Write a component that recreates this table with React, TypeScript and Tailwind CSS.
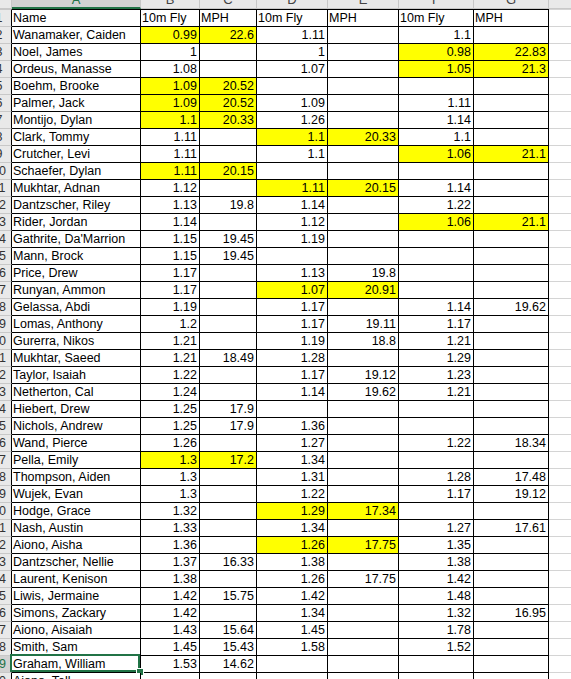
import React from "react";

// column widths include the right border line
const colW = ["w-[129px]", "w-[59px]", "w-[57px]", "w-[71px]", "w-[71px]", "w-[75px]", "w-[75px]"];
const letters = ["A", "B", "C", "D", "E", "F", "G"];

const head = ["Name", "10m Fly", "MPH", "10m Fly", "MPH", "10m Fly", "MPH"];

// "*" marks a yellow cell
const rows: string[][] = [
  ["Wanamaker, Caiden", "0.99*", "22.6*", "1.11", "", "1.1", ""],
  ["Noel, James", "1", "", "1", "", "0.98*", "22.83*"],
  ["Ordeus, Manasse", "1.08", "", "1.07", "", "1.05*", "21.3*"],
  ["Boehm, Brooke", "1.09*", "20.52*", "", "", "", ""],
  ["Palmer, Jack", "1.09*", "20.52*", "1.09", "", "1.11", ""],
  ["Montijo, Dylan", "1.1*", "20.33*", "1.26", "", "1.14", ""],
  ["Clark, Tommy", "1.11", "", "1.1*", "20.33*", "1.1", ""],
  ["Crutcher, Levi", "1.11", "", "1.1", "", "1.06*", "21.1*"],
  ["Schaefer, Dylan", "1.11*", "20.15*", "", "", "", ""],
  ["Mukhtar, Adnan", "1.12", "", "1.11*", "20.15*", "1.14", ""],
  ["Dantzscher, Riley", "1.13", "19.8", "1.14", "", "1.22", ""],
  ["Rider, Jordan", "1.14", "", "1.12", "", "1.06*", "21.1*"],
  ["Gathrite, Da'Marrion", "1.15", "19.45", "1.19", "", "", ""],
  ["Mann, Brock", "1.15", "19.45", "", "", "", ""],
  ["Price, Drew", "1.17", "", "1.13", "19.8", "", ""],
  ["Runyan, Ammon", "1.17", "", "1.07*", "20.91*", "", ""],
  ["Gelassa, Abdi", "1.19", "", "1.17", "", "1.14", "19.62"],
  ["Lomas, Anthony", "1.2", "", "1.17", "19.11", "1.17", ""],
  ["Gurerra, Nikos", "1.21", "", "1.19", "18.8", "1.21", ""],
  ["Mukhtar, Saeed", "1.21", "18.49", "1.28", "", "1.29", ""],
  ["Taylor, Isaiah", "1.22", "", "1.17", "19.12", "1.23", ""],
  ["Netherton, Cal", "1.24", "", "1.14", "19.62", "1.21", ""],
  ["Hiebert, Drew", "1.25", "17.9", "", "", "", ""],
  ["Nichols, Andrew", "1.25", "17.9", "1.36", "", "", ""],
  ["Wand, Pierce", "1.26", "", "1.27", "", "1.22", "18.34"],
  ["Pella, Emily", "1.3*", "17.2*", "1.34", "", "", ""],
  ["Thompson, Aiden", "1.3", "", "1.31", "", "1.28", "17.48"],
  ["Wujek, Evan", "1.3", "", "1.22", "", "1.17", "19.12"],
  ["Hodge, Grace", "1.32", "", "1.29*", "17.34*", "", ""],
  ["Nash, Austin", "1.33", "", "1.34", "", "1.27", "17.61"],
  ["Aiono, Aisha", "1.36", "", "1.26*", "17.75*", "1.35", ""],
  ["Dantzscher, Nellie", "1.37", "16.33", "1.38", "", "1.38", ""],
  ["Laurent, Kenison", "1.38", "", "1.26", "17.75", "1.42", ""],
  ["Liwis, Jermaine", "1.42", "15.75", "1.42", "", "1.48", ""],
  ["Simons, Zackary", "1.42", "", "1.34", "", "1.32", "16.95"],
  ["Aiono, Aisaiah", "1.43", "15.64", "1.45", "", "1.78", ""],
  ["Smith, Sam", "1.45", "15.43", "1.58", "", "1.52", ""],
  ["Graham, William", "1.53", "14.62", "", "", "", ""],
  ["Aiono, Tell", "", "", "", "", "", ""],
];

const SELECTED = 39;

function RowHead({ n, top }: { n: number; top?: boolean }) {
  const sel = n === SELECTED;
  return (
    <div
      className={`w-[12px] shrink-0 overflow-hidden border-r border-b border-r-black border-b-[#c8c8c8] ${
        top ? "border-t border-t-[#c8c8c8]" : ""
      } ${sel ? "bg-[#d2d2d2] text-[#217346]" : "bg-[#e9e9e9] text-[#333]"}`}
    >
      <div className="w-[30px] -ml-[16px] text-center">{n}</div>
    </div>
  );
}

function Cell({ v, i, top, num, selected }: { v: string; i: number; top?: boolean; num?: boolean; selected?: boolean }) {
  const yellow = v.endsWith("*");
  const text = yellow ? v.slice(0, -1) : v;
  return (
    <div
      className={`${colW[i]} shrink-0 relative border-r border-b border-black whitespace-nowrap px-[1px] ${
        top ? "border-t" : ""
      } ${num ? "text-right pr-[2px]" : "text-left"} ${yellow ? "bg-[#ffff00]" : "bg-white"} ${
        i === 0 ? "overflow-visible z-10" : "overflow-hidden"
      }`}
    >
      {text}
      {selected && (
        <>
          <div className="absolute -left-[2px] -top-[2px] right-0 bottom-0 border-2 border-[#217346]" />
          <div className="absolute -right-[4px] -bottom-[4px] w-[8px] h-[8px] bg-[#217346] border border-white" />
        </>
      )}
    </div>
  );
}

export default function App() {
  return (
    <div className="w-[571px] h-[679px] overflow-hidden bg-white text-black font-['Liberation_Sans',Arial,sans-serif] text-[12.5px] leading-[16px]">
      {/* column letters */}
      <div className="flex h-[9px] overflow-hidden">
        <div className="w-[12px] shrink-0 bg-[#e9e9e9] border-r border-b border-[#c8c8c8]" />
        {letters.map((l, i) => (
          <div
            key={l}
            className={`${colW[i]} shrink-0 overflow-hidden text-center text-[13px] ${
              i === 0
                ? "bg-[#d2d2d2] text-[#217346] border-r border-r-[#c8c8c8] border-b-2 border-b-[#217346]"
                : "bg-[#e9e9e9] text-[#444] border-r border-b border-[#c8c8c8]"
            }`}
          >
            <div className="-mt-[8px]">{l}</div>
          </div>
        ))}
        <div className="flex-1 bg-[#e9e9e9] border-b border-[#c8c8c8]" />
      </div>

      {/* title row */}
      <div className="flex h-[18px]">
        <RowHead n={1} top />
        {head.map((h, i) => (
          <Cell key={i} v={h} i={i} top />
        ))}
        <div className="flex-1 border-t border-b border-[#d4d4d4]" />
      </div>

      {rows.map((r, ri) => (
        <div key={ri} className="flex h-[17px]">
          <RowHead n={ri + 2} />
          {r.map((v, i) => (
            <Cell key={i} v={v} i={i} num={i > 0} selected={i === 0 && ri + 2 === SELECTED} />
          ))}
          <div className="flex-1 border-b border-[#d4d4d4]" />
        </div>
      ))}
    </div>
  );
}
